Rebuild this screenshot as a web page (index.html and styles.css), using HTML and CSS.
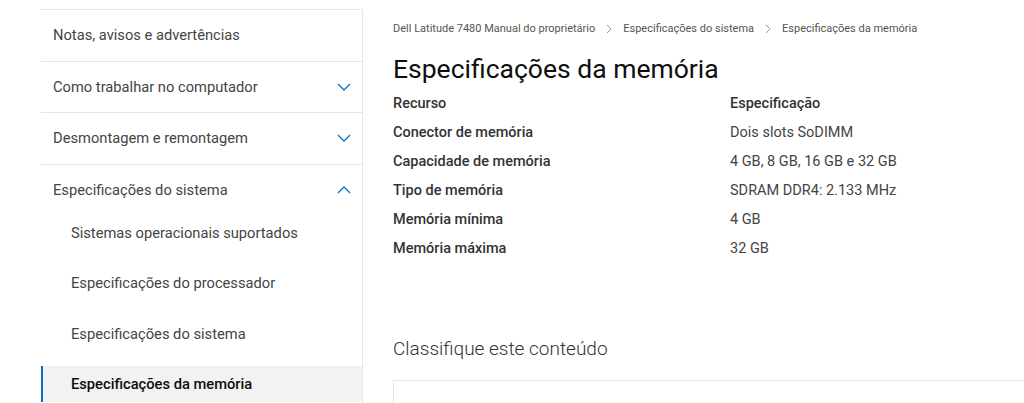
FILE: index.html
```html
<!DOCTYPE html>
<html lang="pt">
<head>
<meta charset="UTF-8">
<title>Especificações da memória</title>
<link rel="stylesheet" href="styles.css">
</head>
<body>

<div class="page">
    <!-- Table of contents -->
    <nav class="toc">
        <div class="toc-item">Notas, avisos e advertências</div>
        <div class="toc-item">Como trabalhar no computador
            <svg class="chev" viewBox="0 0 14 8"><path d="M1 1l6 6 6-6"/></svg>
        </div>
        <div class="toc-item">Desmontagem e remontagem
            <svg class="chev" viewBox="0 0 14 8"><path d="M1 1l6 6 6-6"/></svg>
        </div>
        <div class="toc-group">
            <div class="toc-item open">Especificações do sistema
                <svg class="chev" viewBox="0 0 14 8"><path d="M1 7l6-6 6 6"/></svg>
            </div>
            <div class="toc-sub">
                <div class="sub-item">Sistemas operacionais suportados</div>
                <div class="sub-item">Especificações do processador</div>
                <div class="sub-item">Especificações do sistema</div>
                <div class="sub-item active">Especificações da memória</div>
            </div>
        </div>
    </nav>

    <main class="content">
        <div class="crumbs">
            <span>Dell Latitude 7480 Manual do proprietário</span>
            <svg class="sep" viewBox="0 0 6 10"><path d="M1 1l4 4-4 4"/></svg>
            <span>Especificações do sistema</span>
            <svg class="sep" viewBox="0 0 6 10"><path d="M1 1l4 4-4 4"/></svg>
            <span>Especificações da memória</span>
        </div>

        <h1>Especificações da memória</h1>

        <table class="specs">
            <tr><th>Recurso</th><th>Especificação</th></tr>
            <tr><td>Conector de memória</td><td>Dois slots SoDIMM</td></tr>
            <tr><td>Capacidade de memória</td><td>4 GB, 8 GB, 16 GB e 32 GB</td></tr>
            <tr><td>Tipo de memória</td><td>SDRAM DDR4: 2.133 MHz</td></tr>
            <tr><td>Memória mínima</td><td>4 GB</td></tr>
            <tr><td>Memória máxima</td><td>32 GB</td></tr>
        </table>

        <h2 class="rate-title">Classifique este conteúdo</h2>
        <div class="rate-box"></div>
    </main>
</div>

</body>
</html>
```

FILE: styles.css
```css
body {
    margin: 0;
    font-family: Roboto, "Noto Sans", sans-serif;
    color: #444;
    background: #fff;
    overflow: hidden;
}
.page {
    display: flex;
    gap: 30px;
    padding: 9px 0 0 41px;
}

/* Sidebar */
.toc {
    width: 321px;
    flex-shrink: 0;
    border-top: 1px solid #e5e5e5;
    border-right: 1px solid #e5e5e5;
}
.toc-item {
    height: 50.5px;
    display: flex;
    align-items: center;
    justify-content: space-between;
    padding: 0 11px 0 12px;
    border-bottom: 1px solid #e5e5e5;
    font-size: 14.7px;
    color: #444;
}
.toc-item.open {
    border-bottom: none;
}
.chev {
    width: 14px;
    height: 8px;
    fill: none;
    stroke: #0672cb;
    stroke-width: 1.3;
}
.toc-sub {
    display: flex;
    flex-direction: column;
    gap: 14.3px;
}
.sub-item {
    height: 36px;
    display: flex;
    align-items: center;
    padding-left: 30px;
    font-size: 14.7px;
    color: #444;
}
.sub-item.active {
    background: #f2f2f2;
    border-left: 2px solid #0672cb;
    padding-left: 28px;
    color: #0e0e0e;
    font-weight: 500;
}

/* Article */
.content {
    flex: 1;
    padding-top: 13px;
}
.crumbs {
    font-size: 11px;
    color: #555;
    display: flex;
    align-items: center;
    gap: 11px;
}
.crumbs .sep {
    width: 6px;
    height: 10px;
    fill: none;
    stroke: #999;
    stroke-width: 1;
}
h1 {
    margin: 18px 0 5px;
    font-size: 26.5px;
    font-weight: 400;
    color: #0e0e0e;
}
.specs {
    border-collapse: collapse;
    font-size: 14.5px;
}
.specs th,
.specs td {
    height: 29px;
    padding: 0;
    text-align: left;
    vertical-align: middle;
}
.specs th {
    font-weight: 500;
    color: #333;
}
.specs td:first-child,
.specs th:first-child {
    width: 337px;
    font-weight: 500;
    color: #333;
}
.specs td {
    color: #444;
}
.rate-title {
    margin: 74px 0 20px;
    font-size: 19px;
    font-weight: 300;
    color: #333;
}
.rate-box {
    height: 60px;
    border: 1px solid #e8e8e8;
    border-right: none;
    box-shadow: 0 0 3px rgba(0,0,0,0.04);
}
```
